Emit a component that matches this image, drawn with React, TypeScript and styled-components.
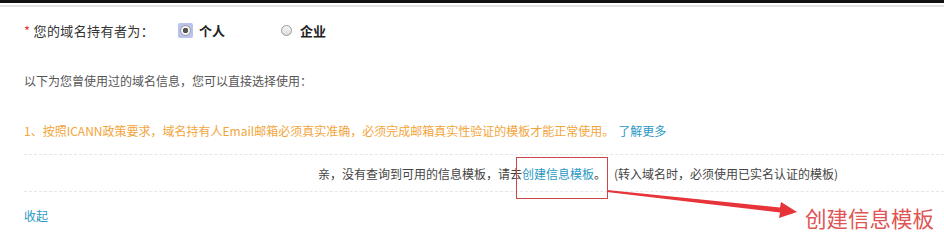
import styled, { createGlobalStyle } from "styled-components";

const GlobalStyle = createGlobalStyle`
  html, body {
    margin: 0;
    overflow: hidden;
  }
  body {
    background: #fff;
    font-family: "Noto Sans CJK SC", "Liberation Sans", sans-serif;
    color: #333;
  }
`;

const Page = styled.div`
  position: relative;
  width: 100%;
  height: 236px;
  overflow: hidden;
`;

const TopBar = styled.div`
  height: 3px;
  background: #111;
  border-bottom: 2px solid #fff;
  box-shadow: 0 2px 0 #e2e2e2;
`;

const Content = styled.div`
  padding: 15px 0 0 24px;
  display: flex;
  flex-direction: column;
`;

const Row = styled.div<{ $gap?: number; $size?: number }>`
  display: flex;
  align-items: center;
  height: 20px;
  margin-top: ${(p) => p.$gap ?? 0}px;
  font-size: ${(p) => p.$size ?? 12}px;
`;

const Label = styled.span`
  font-size: 13px;
  letter-spacing: 0.4px;
  color: #333;
  width: 154px;
`;

const Star = styled.span`
  color: #e4393c;
  margin-right: 3px;
`;

const RadioOption = styled.label<{ $width: number }>`
  display: flex;
  align-items: center;
  gap: 6px;
  width: ${(p) => p.$width}px;
  font-size: 13px;
  font-weight: 700;
  color: #222;
`;

const RadioBox = styled.span<{ $checked?: boolean }>`
  display: inline-flex;
  align-items: center;
  justify-content: center;
  width: 15px;
  height: 15px;
  border-radius: 2px;
  background: ${(p) => (p.$checked ? "#b9c3ee" : "transparent")};
`;

const RadioDot = styled.span<{ $checked?: boolean }>`
  width: 11px;
  height: 11px;
  box-sizing: border-box;
  border-radius: 50%;
  border: 1px solid #9a9a9a;
  background: ${(p) =>
    p.$checked
      ? "radial-gradient(circle, #555 0 2.5px, #f4f4f4 3px)"
      : "linear-gradient(#f6f6f6, #dcdcdc)"};
`;

const Info = styled.span`
  color: #555;
`;

const Notice = styled.span`
  color: #f2a53b;
`;

const Link = styled.a<{ $space?: number }>`
  color: #2a98c4;
  text-decoration: none;
  margin-left: ${(p) => p.$space ?? 0}px;
`;

const Dashed = styled.div<{ $gap?: number }>`
  border-top: 1px dashed #e6e6e6;
  margin-top: ${(p) => p.$gap ?? 0}px;
`;

const Empty = styled.div`
  height: 36px;
  display: flex;
  align-items: center;
  padding-left: 294px;
  font-size: 12px;
  color: #444;
`;

const Hint = styled.span`
  margin-left: 8px;
  color: #444;
`;

const Collapse = styled(Row)`
  margin-top: 13px;
`;

const MarkBox = styled.div`
  position: absolute;
  left: 516px;
  top: 157px;
  width: 92px;
  height: 42px;
  border: 1px solid #c9474b;
  box-sizing: border-box;
`;

const ArrowLayer = styled.svg`
  position: absolute;
  left: 0;
  top: 0;
  pointer-events: none;
`;

const Annotation = styled.div`
  position: absolute;
  left: 805px;
  top: 203px;
  font-size: 21.5px;
  line-height: 30px;
  color: #e05555;
`;

export default function App() {
  return (
    <Page>
      <GlobalStyle />
      <TopBar />
      <Content>
        <Row $size={13}>
          <Label>
            <Star>*</Star>您的域名持有者为：
          </Label>
          <RadioOption $width={101}>
            <RadioBox $checked>
              <RadioDot $checked />
            </RadioBox>
            个人
          </RadioOption>
          <RadioOption $width={60}>
            <RadioBox>
              <RadioDot />
            </RadioBox>
            企业
          </RadioOption>
        </Row>
        <Row $gap={30}>
          <Info>以下为您曾使用过的域名信息，您可以直接选择使用：</Info>
        </Row>
        <Row $gap={30}>
          <Notice>
            1、按照ICANN政策要求，域名持有人Email邮箱必须真实准确，必须完成邮箱真实性验证的模板才能正常使用。
          </Notice>
          <Link $space={4}>了解更多</Link>
        </Row>
        <Dashed $gap={14} />
        <Empty>
          亲，没有查询到可用的信息模板，请去<Link>创建信息模板</Link>。
          <Hint>(转入域名时，必须使用已实名认证的模板)</Hint>
        </Empty>
        <Dashed />
        <Collapse>
          <Link>收起</Link>
        </Collapse>
      </Content>
      <MarkBox />
      <ArrowLayer width="944" height="236" viewBox="0 0 944 236">
        <polygon
          points="607,190 780,207.5 781,202 797,212 779,218 780,212.5 607,192"
          fill="#e6343a"
        />
      </ArrowLayer>
      <Annotation>创建信息模板</Annotation>
    </Page>
  );
}
